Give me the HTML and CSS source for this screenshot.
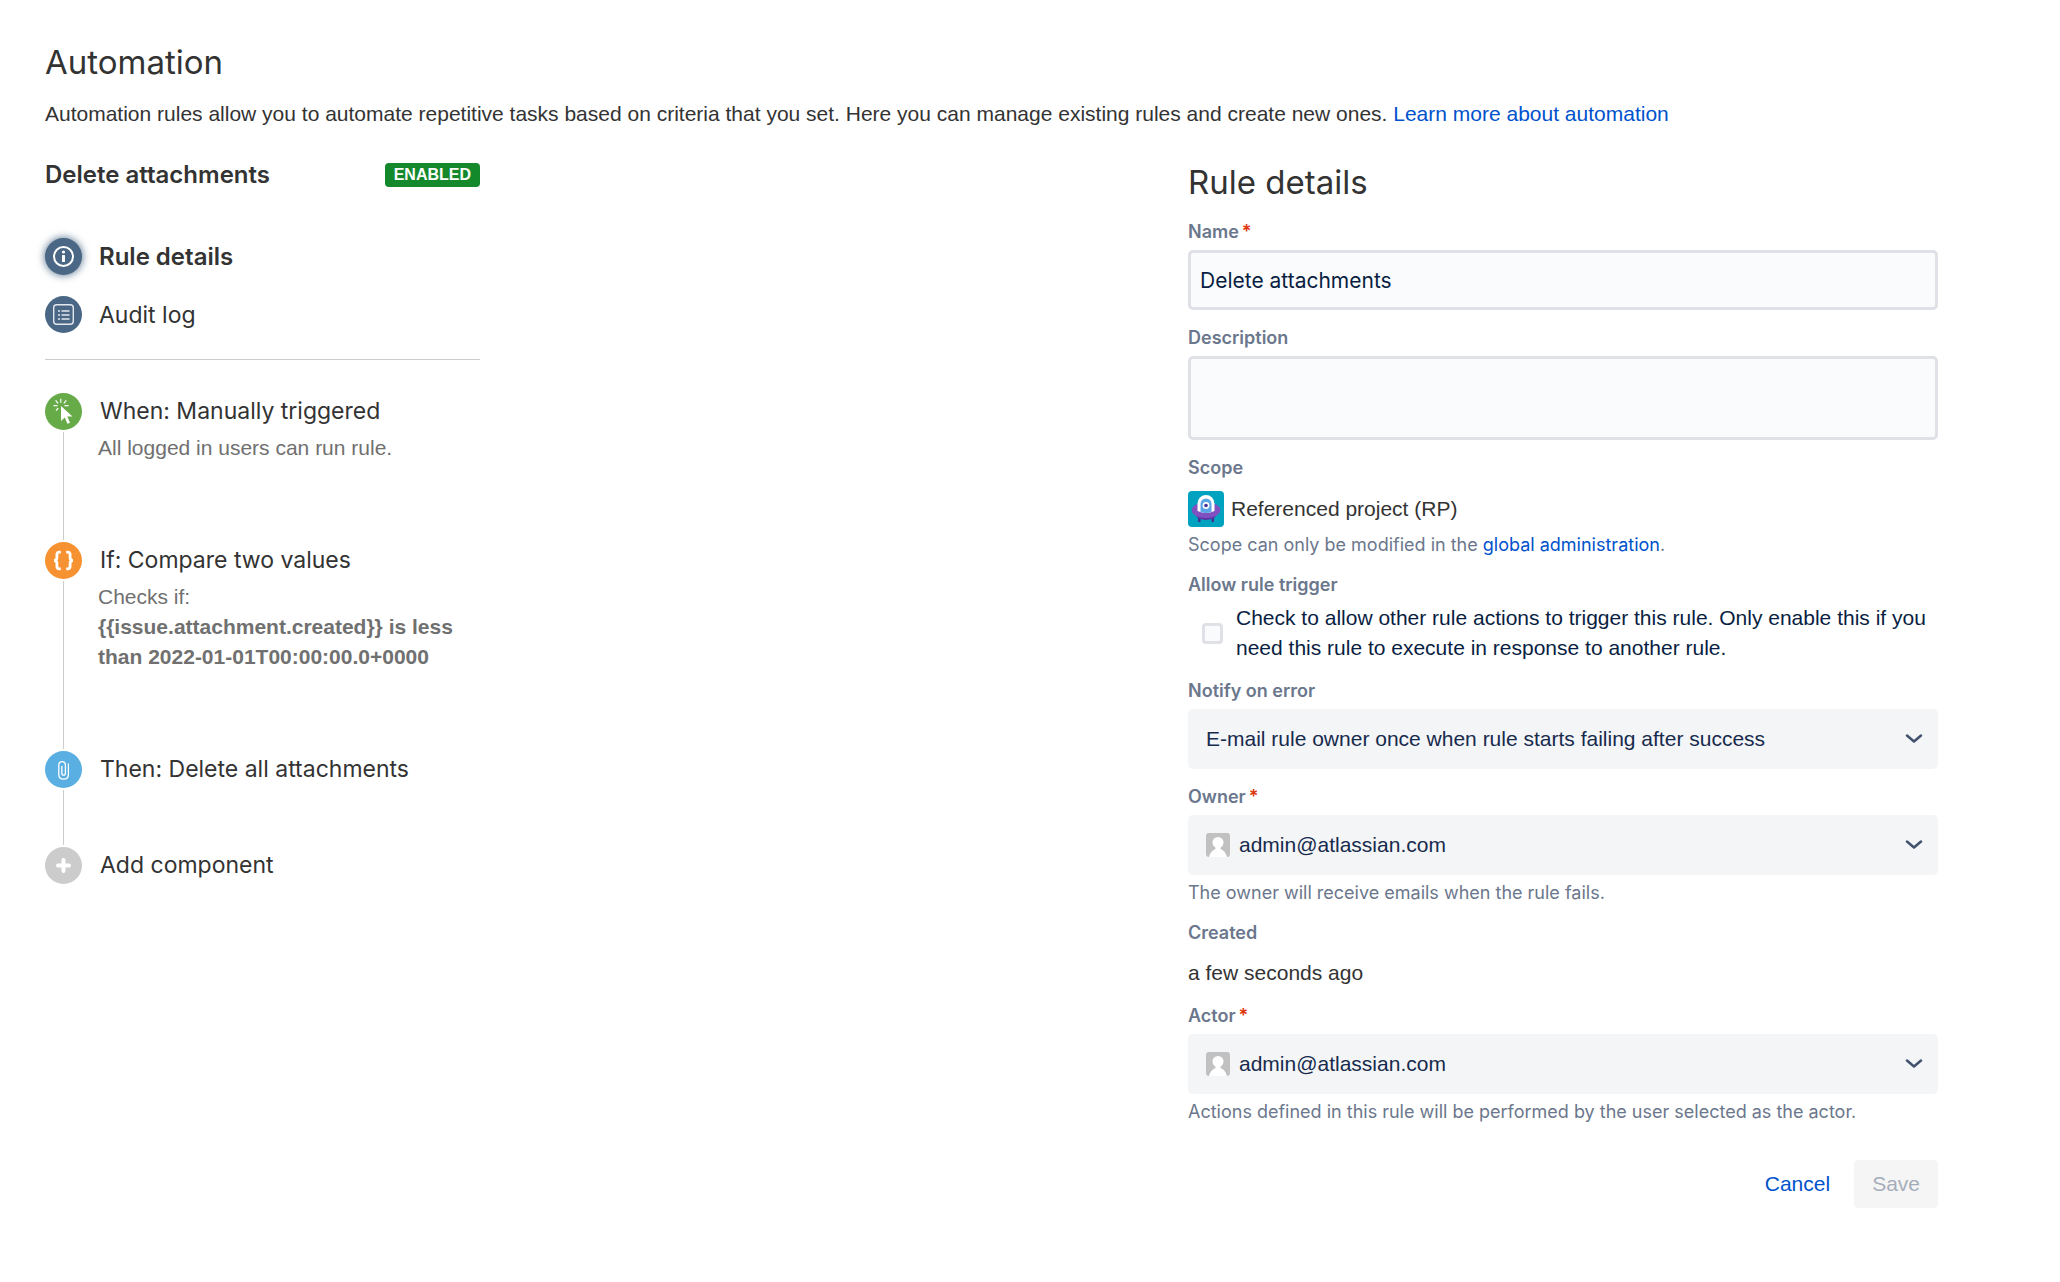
FILE: index.html
```html
<!DOCTYPE html>
<html lang="en">
  <head>
    <meta charset="UTF-8" />
    <meta name="viewport" content="width=device-width, initial-scale=1.0" />
    <title>Automation</title>
    <link rel="stylesheet" href="styles.css" />
  </head>
  <body>
    <header class="page_header">
      <h1>Automation</h1>
      <p>
        Automation rules allow you to automate repetitive tasks based on criteria that you set. Here you can manage existing rules and create new ones.
        <a href="#">Learn more about automation</a>
      </p>
    </header>

    <div class="container">
      <aside class="sidebar">
        <div class="rule_head">
          <h2>Delete attachments</h2>
          <span class="badge">ENABLED</span>
        </div>

        <nav class="rule_nav">
          <a class="nav_item active" href="#">
            <span class="icon navy">
              <svg viewBox="0 0 37 37">
                <circle cx="18.5" cy="18.5" r="9.5" fill="none" stroke="#fff" stroke-width="2" />
                <rect x="17" y="17" width="3" height="7" rx="0.5" fill="#fff" />
                <circle cx="18.5" cy="14" r="1.6" fill="#fff" />
              </svg>
            </span>
            Rule details
          </a>
          <a class="nav_item" href="#">
            <span class="icon navy">
              <svg viewBox="0 0 37 37">
                <rect x="8.7" y="8.7" width="19.6" height="19.6" rx="3" fill="none" stroke="#e3e8ee" stroke-width="1.4" />
                <path d="M13 15h2M16.5 15h8M13 19h2M16.5 19h8M13 23h2M16.5 23h8" stroke="#e3e8ee" stroke-width="1.6" />
              </svg>
            </span>
            Audit log
          </a>
        </nav>

        <ol class="steps">
          <li class="step">
            <span class="icon green">
              <svg viewBox="0 0 37 37">
                <path d="M16 13v15l3.8-3.4 2.6 6.2 2.6-1.1-2.7-6.1h5.2z" fill="#fff" />
                <path d="M15.8 5.8v4M10.6 7.4l2.5 3M21.3 7.4l-2.5 3M8.5 12.6h4M19.5 12.6h4M11 17.5l2.3-2.3" fill="none" stroke="#fff" stroke-width="1.2" />
              </svg>
            </span>
            <div class="step_text">
              <h3>When: Manually triggered</h3>
              <p>All logged in users can run rule.</p>
            </div>
          </li>
          <li class="step">
            <span class="icon orange">
              <svg viewBox="0 0 37 37">
                <path d="M15.8 10.2h-1.3q-2.6 0-2.6 2.6v3q0 2.7-2.9 2.7 2.9 0 2.9 2.7v3q0 2.6 2.6 2.6h1.3M21.2 10.2h1.3q2.6 0 2.6 2.6v3q0 2.7 2.9 2.7-2.9 0-2.9 2.7v3q0 2.6-2.6 2.6h-1.3" fill="none" stroke="#fff" stroke-width="2.8" />
              </svg>
            </span>
            <div class="step_text">
              <h3>If: Compare two values</h3>
              <p>
                Checks if:<br />
                <strong>{{issue.attachment.created}} is less than 2022-01-01T00:00:00.0+0000</strong>
              </p>
            </div>
          </li>
          <li class="step">
            <span class="icon blue">
              <svg viewBox="0 0 37 37">
                <path d="M23.4 12.5v11q0 4.7-4.8 4.7t-4.8-4.7v-9.3q0-3.6 3.3-3.6t3.3 3.6v8q0 1.9-1.800 1.9t-1.800-1.9v-7.2" fill="none" stroke="#fff" stroke-width="1.3" />
              </svg>
            </span>
            <div class="step_text">
              <h3>Then: Delete all attachments</h3>
            </div>
          </li>
          <li class="step">
            <span class="icon gray">
              <svg viewBox="0 0 37 37">
                <path d="M18.5 13v11M13 18.5h11" stroke="#fff" stroke-width="4" stroke-linecap="round" />
              </svg>
            </span>
            <div class="step_text">
              <h3>Add component</h3>
            </div>
          </li>
        </ol>
      </aside>

      <form class="details" action="#" method="post">
        <h1>Rule details</h1>

        <label class="label" for="ruleName">Name<span class="required">*</span></label>
        <input class="text_input" type="text" id="ruleName" name="name" value="Delete attachments" />

        <label class="label" for="ruleDesc">Description</label>
        <textarea class="text_input" id="ruleDesc" name="description"></textarea>

        <div class="label">Scope</div>
        <div class="scope">
          <svg class="project_icon" viewBox="0 0 36 36">
            <rect width="36" height="36" rx="4" fill="#00a3bf" />
            <path d="M10 26h2.5v5h-2.5zM23.5 26h2.5v5h-2.5z" fill="#403294" />
            <ellipse cx="18" cy="24" rx="10" ry="5" fill="#5a35a8" />
            <path d="M9 13h18c3.500 1.500 5.300 3.500 5.300 6 0 4.500-6 8-14.300 8s-14.300-3.500-14.300-8c0-2.500 1.800-4.500 5.300-6z" fill="#8050c0" />
            <path d="M9.5 20v-7.500a8.500 8.500 0 0 1 17 0v7.500q-8.500 4-17 0z" fill="#fff" />
            <path d="M12.5 21v-8a5.500 5.500 0 0 1 11 0v8q-5.500 2-11 0z" fill="#5ba4e5" />
            <circle cx="18" cy="14.5" r="3.400" fill="#fff" />
            <circle cx="18" cy="14.5" r="1.800" fill="#403294" />
          </svg>
          Referenced project (RP)
        </div>
        <p class="help">Scope can only be modified in the <a href="#">global administration</a>.</p>

        <div class="label">Allow rule trigger</div>
        <div class="check_row">
          <input type="checkbox" id="allowTrigger" name="allowTrigger" />
          <label for="allowTrigger">Check to allow other rule actions to trigger this rule. Only enable this if you need this rule to execute in response to another rule.</label>
        </div>

        <label class="label" for="notify">Notify on error</label>
        <div class="select_box">
          <select id="notify" name="notify">
            <option>E-mail rule owner once when rule starts failing after success</option>
          </select>
          <svg class="chevron" viewBox="0 0 18 10"><path d="M2 1.500l7 6 7-6" /></svg>
        </div>

        <label class="label" for="owner">Owner<span class="required">*</span></label>
        <div class="select_box with_avatar">
          <svg class="avatar" viewBox="0 0 24 24">
            <rect width="24" height="24" rx="3" fill="#c1c1c1" />
            <circle cx="12" cy="9.5" r="5.5" fill="#fff" />
            <path d="M3 24q1.500-6 6.500-8v-3h5v3q5 2 6.500 8z" fill="#fff" />
          </svg>
          <select id="owner" name="owner">
            <option>admin@atlassian.com</option>
          </select>
          <svg class="chevron" viewBox="0 0 18 10"><path d="M2 1.500l7 6 7-6" /></svg>
        </div>
        <p class="help">The owner will receive emails when the rule fails.</p>

        <div class="label">Created</div>
        <p class="created">a few seconds ago</p>

        <label class="label" for="actor">Actor<span class="required">*</span></label>
        <div class="select_box with_avatar">
          <svg class="avatar" viewBox="0 0 24 24">
            <rect width="24" height="24" rx="3" fill="#c1c1c1" />
            <circle cx="12" cy="9.5" r="5.5" fill="#fff" />
            <path d="M3 24q1.500-6 6.500-8v-3h5v3q5 2 6.500 8z" fill="#fff" />
          </svg>
          <select id="actor" name="actor">
            <option>admin@atlassian.com</option>
          </select>
          <svg class="chevron" viewBox="0 0 18 10"><path d="M2 1.500l7 6 7-6" /></svg>
        </div>
        <p class="help">Actions defined in this rule will be performed by the user selected as the actor.</p>

        <div class="buttons">
          <button type="button" class="cancel_btn">Cancel</button>
          <button type="submit" class="save_btn" disabled>Save</button>
        </div>
      </form>
    </div>
  </body>
</html>
```
FILE: styles.css
```css
* {
  box-sizing: border-box;
}
body {
  margin: 0;
  padding: 40px 122px 40px 45px;
  background-color: #fff;
  color: #333;
  font-family: "Liberation Sans", Arial, sans-serif;
  font-size: 21px;
  line-height: 30px;
}
h1,
h2,
h3,
p {
  margin: 0;
}
a {
  color: #0052cc;
  text-decoration: none;
}
h1 {
  font-family: Inter, sans-serif;
  font-size: 33px;
  font-weight: 400;
  line-height: 44px;
}
.page_header p {
  margin-top: 15px;
}
.container {
  display: flex;
  justify-content: space-between;
  gap: 40px;
  margin-top: 31px;
}

/* left column */
.sidebar {
  flex: 0 0 435px;
}
.rule_head {
  display: flex;
  justify-content: space-between;
  align-items: center;
}
h2 {
  font-family: Inter, sans-serif;
  font-size: 24px;
  font-weight: 600;
  line-height: 30px;
}
.badge {
  padding: 0 9px;
  border-radius: 4px;
  background-color: #14892c;
  color: #fff;
  font-size: 16px;
  font-weight: bold;
  line-height: 24px;
}
.rule_nav {
  display: flex;
  flex-direction: column;
  gap: 21px;
  margin-top: 48px;
  padding-bottom: 26px;
  border-bottom: 1px solid #ccc;
}
.nav_item {
  display: flex;
  align-items: center;
  gap: 17px;
  color: #333;
  font-family: Inter, sans-serif;
  font-size: 23px;
}
.nav_item.active {
  font-size: 24px;
  font-weight: 600;
}
.icon {
  flex: none;
  width: 37px;
  height: 37px;
  border-radius: 50%;
}
.icon svg {
  display: block;
}
.active .icon {
  box-shadow: 0 0 8px #4a6785;
}
.navy {
  background-color: #4a6785;
}
.green {
  background-color: #67ab49;
}
.orange {
  background-color: #f79232;
}
.blue {
  background-color: #59afe1;
}
.gray {
  background-color: #ccc;
}

.steps {
  margin: 33px 0 0;
  padding: 0;
  list-style: none;
}
.step {
  position: relative;
  display: flex;
  gap: 16px;
  padding-bottom: 59px;
}
.step:nth-child(-n + 2) {
  padding-bottom: 79px;
}
/* line to the next step */
.step:not(:last-child)::before {
  content: "";
  position: absolute;
  top: 39px;
  bottom: 2px;
  left: 18px;
  width: 1px;
  background-color: #ccc;
}
.step h3 {
  padding-left: 2px;
  font-family: Inter, sans-serif;
  font-size: 23px;
  font-weight: 400;
  line-height: 37px;
}
.step p {
  margin-top: 3px;
  color: #707070;
}

/* right column */
.details {
  flex: 0 1 750px;
  display: flex;
  flex-direction: column;
}
.label {
  margin: 16px 0 6px;
  color: #6b778c;
  font-family: Inter, sans-serif;
  font-size: 18px;
  font-weight: 600;
  line-height: 24px;
}
.required {
  padding-left: 3px;
  color: #de350b;
}
.text_input {
  height: 60px;
  padding: 8px 9px;
  border: 3px solid #dfe1e6;
  border-radius: 5px;
  background-color: #fafbfc;
  color: #091e42;
  font-family: Inter, sans-serif;
  font-size: 21px;
  outline: none;
}
textarea.text_input {
  height: 84px;
  resize: none;
}
.text_input:focus {
  border-color: #4c9aff;
}
.scope {
  display: flex;
  align-items: center;
  gap: 7px;
  margin-top: 5px;
}
.project_icon {
  width: 36px;
  height: 36px;
}
.help {
  margin-top: 6px;
  color: #6b778c;
  font-family: Inter, sans-serif;
  font-size: 18px;
  line-height: 24px;
}
.check_row {
  display: flex;
  align-items: center;
  gap: 13px;
  padding-left: 14px;
  color: #091e42;
}
.check_row input {
  appearance: none;
  flex: none;
  width: 21px;
  height: 21px;
  margin: 0;
  border: 3px solid #dfe1e6;
  border-radius: 4px;
  background-color: #fafbfc;
}
.check_row input:checked {
  background-color: #0052cc;
}
.select_box {
  position: relative;
  display: flex;
}
.select_box select {
  appearance: none;
  width: 100%;
  height: 60px;
  padding: 0 54px 2px 18px;
  border: 0;
  border-radius: 5px;
  background-color: #f4f5f7;
  color: #172b4d;
  font-family: inherit;
  font-size: 21px;
}
.with_avatar select {
  padding-left: 51px;
}
.avatar {
  position: absolute;
  top: 18px;
  left: 18px;
  width: 24px;
  height: 24px;
}
.chevron {
  position: absolute;
  top: 25px;
  right: 15px;
  width: 18px;
  height: 10px;
  fill: none;
  stroke: #42526e;
  stroke-width: 2.5;
  stroke-linecap: round;
  stroke-linejoin: round;
  pointer-events: none;
}
.created {
  margin-top: 7px;
}
.buttons {
  display: flex;
  justify-content: flex-end;
  gap: 6px;
  margin-top: 36px;
}
button {
  height: 48px;
  padding: 0 18px;
  border: 0;
  border-radius: 4px;
  font-family: inherit;
  font-size: 21px;
  cursor: pointer;
}
.cancel_btn {
  background: none;
  color: #0052cc;
}
.save_btn {
  background-color: #f5f5f5;
  color: #a5adba;
  cursor: not-allowed;
}
```
